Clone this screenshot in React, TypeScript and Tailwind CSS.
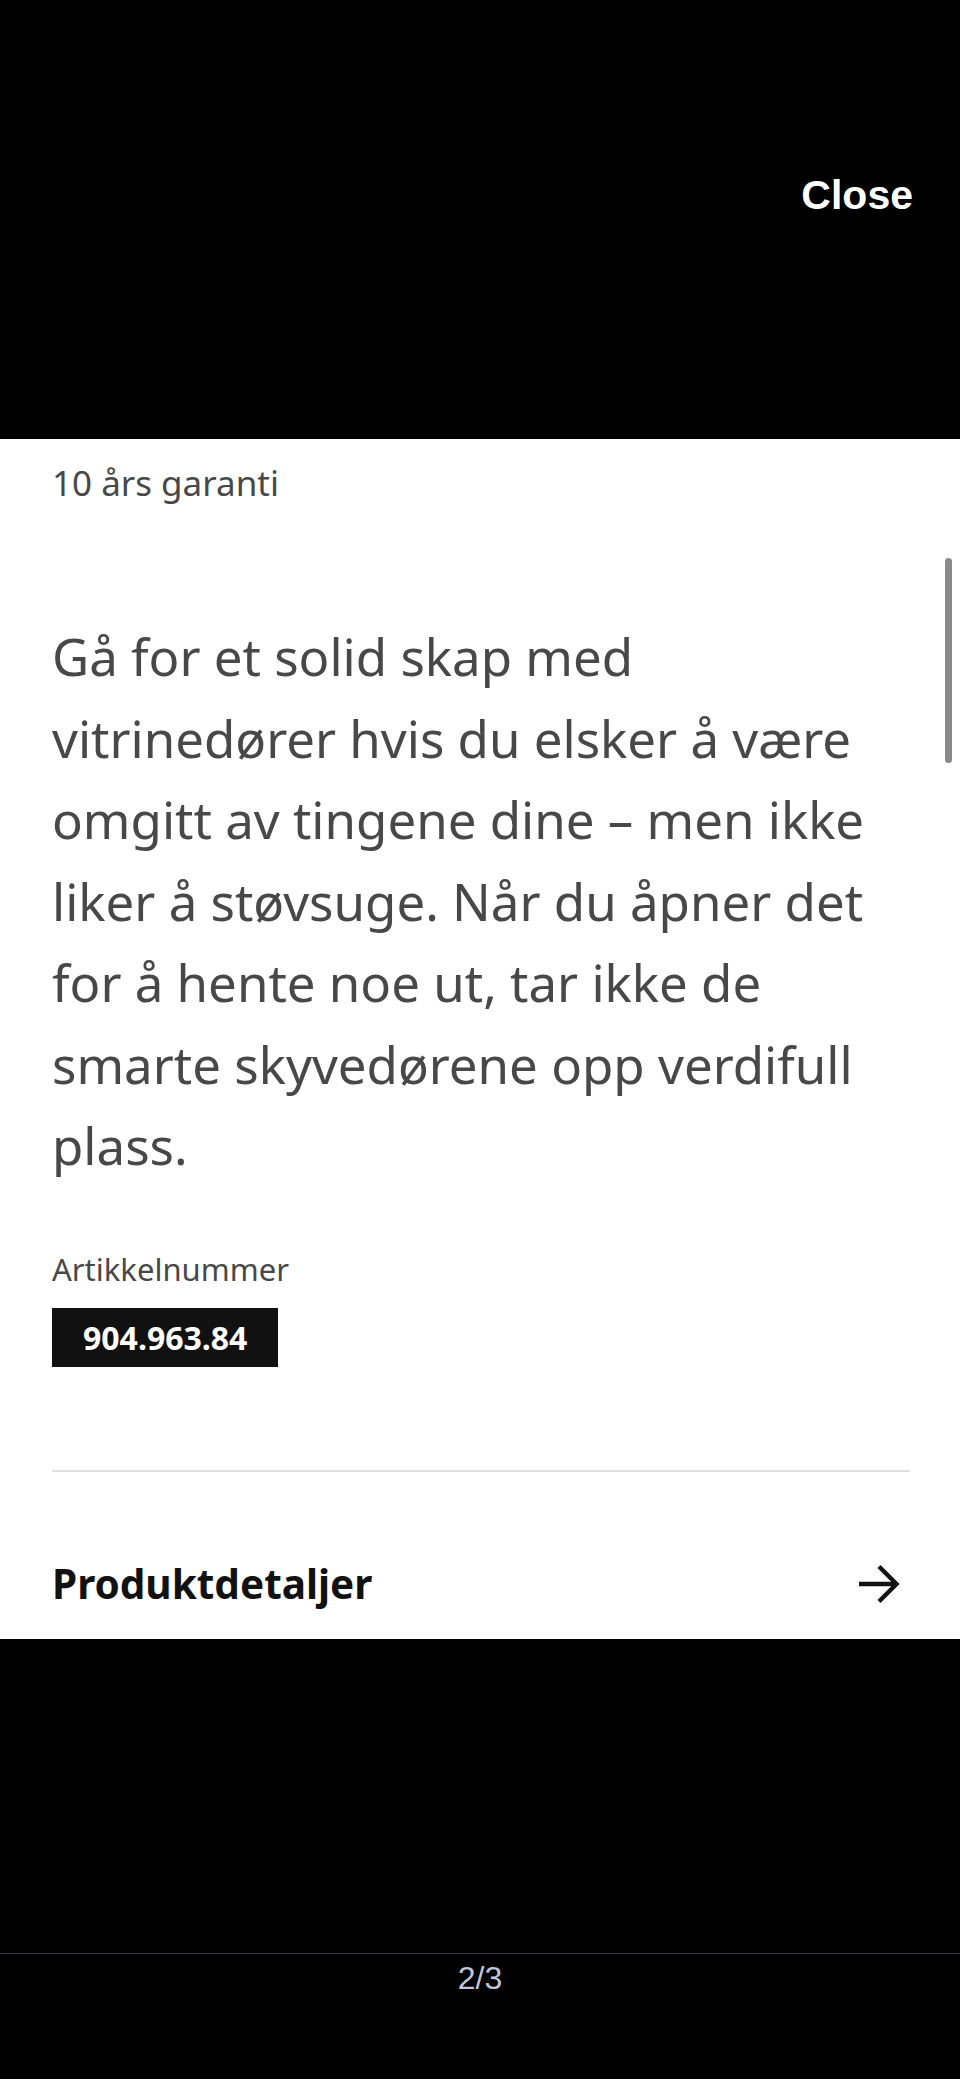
import React from 'react';

const ArrowRight: React.FC = () => (
  <svg width="42" height="42" viewBox="0 0 42 42" fill="none" stroke="#111111" strokeWidth="4.4" strokeLinecap="butt" strokeLinejoin="miter">
    <path d="M1 21 H37" />
    <path d="M21 3.5 L38.5 21 L21 38.5" />
  </svg>
);

const App: React.FC = () => {
  return (
    <div className="min-h-[2079px] w-full bg-black flex flex-col" style={{ fontFamily: '"Noto Sans", sans-serif' }}>
      {/* top bar */}
      <div className="h-[439px] flex justify-end items-start pt-[175px] pr-[47px]">
        <span className="text-white font-bold text-[41px] leading-[41px]" style={{ fontFamily: '"Liberation Sans", Arial, sans-serif' }}>
          Close
        </span>
      </div>

      {/* sheet */}
      <div className="relative h-[1200px] bg-white overflow-hidden pl-[52px] pr-[50px] pt-[20px]">
        <div className="absolute right-[8px] top-[119px] h-[205px] w-[7px] rounded-full bg-[#8a8a8a]" />

        <p className="text-[35px] leading-[48px] text-[#484848]">10 års garanti</p>

        <p className="mt-[109px] text-[51px] leading-[81.5px] text-[#484848]">
          Gå for et solid skap med vitrinedører hvis du elsker å være omgitt av tingene dine – men ikke liker å støvsuge. Når du åpner det for å hente noe ut, tar ikke de smarte skyvedørene opp verdifull plass.
        </p>

        <p className="mt-[62px] text-[31px] leading-[40px] text-[#484848]">Artikkelnummer</p>
        <div className="mt-[19px] inline-flex h-[59px] items-center bg-[#111111] px-[31px]">
          <span className="text-white font-bold text-[32px] leading-[59px]">904.963.84</span>
        </div>

        <div className="mt-[103px] h-[2px] bg-[#dfdfdf]" />

        <div className="mt-[88px] flex items-center justify-between">
          <span className="font-bold text-[40.5px] leading-[48px] text-[#111111]">Produktdetaljer</span>
          <span className="mr-[10px] flex">
            <ArrowRight />
          </span>
        </div>
      </div>

      {/* footer */}
      <div className="h-[314px]" />
      <div className="border-t border-[#3a3a4c] pt-[8px] flex justify-center">
        <span className="text-[32px] leading-[32px] text-[#c2c6d8]" style={{ fontFamily: '"Liberation Sans", Arial, sans-serif' }}>
          2/3
        </span>
      </div>
    </div>
  );
};

export default App;
